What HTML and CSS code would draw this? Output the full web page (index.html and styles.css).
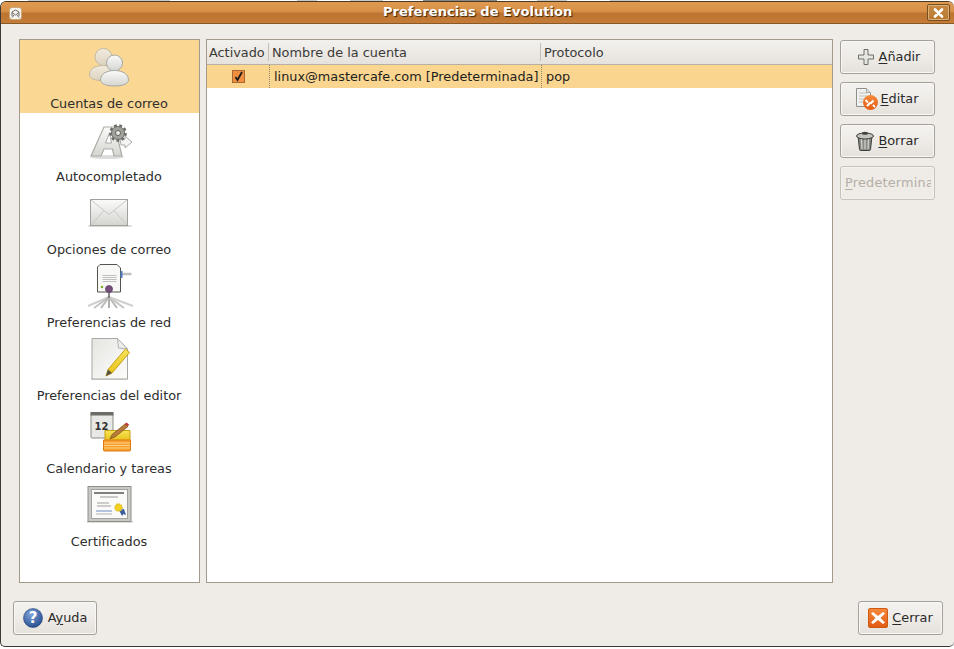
FILE: index.html
```html
<!DOCTYPE html>
<html lang="es">
<head>
<meta charset="utf-8">
<title>Preferencias de Evolution</title>
<link rel="stylesheet" href="styles.css">
</head>
<body>
<svg width="0" height="0" class="defs">
  <defs>
    <linearGradient id="g-white" x1="0" y1="0" x2="0" y2="1"><stop offset="0" stop-color="#fbfbfa"/><stop offset="1" stop-color="#d4d4d0"/></linearGradient>
    <linearGradient id="g-page" x1="0" y1="0" x2="1" y2="1"><stop offset="0" stop-color="#e4e4e0"/><stop offset=".6" stop-color="#f4f4f2"/><stop offset="1" stop-color="#fcfcfb"/></linearGradient>
    <linearGradient id="g-beige" x1="0" y1="0" x2="0" y2="1"><stop offset="0" stop-color="#f2ecdf"/><stop offset="1" stop-color="#dcd2bf"/></linearGradient>
    <linearGradient id="g-yellow" x1="0" y1="0" x2="0" y2="1"><stop offset="0" stop-color="#f6e45a"/><stop offset="1" stop-color="#e6c015"/></linearGradient>
    <linearGradient id="g-orange" x1="0" y1="0" x2="0" y2="1"><stop offset="0" stop-color="#f58a3c"/><stop offset="1" stop-color="#e25a12"/></linearGradient>
    <radialGradient id="g-blue" cx=".4" cy=".3" r=".8"><stop offset="0" stop-color="#7fa4d8"/><stop offset="1" stop-color="#1f4488"/></radialGradient>
  </defs>
</svg>
<div class="strip"></div>
<div class="window">
  <header class="titlebar">
    <svg class="title-icon" width="13" height="13" viewBox="0 0 13 13"><rect x=".5" y=".5" width="12" height="12" rx="2.500" fill="#f6f4f0" stroke="#c9a878"/><path d="M3 9V5l3.500-2L10 5v4M3 5.500l3.500 2.500L10 5.500M3 10.500L5 8M10 10.500L8 8" fill="none" stroke="#6e6a64"/></svg>
    <span class="title-text">Preferencias de Evolution</span>
    <span class="title-close"><svg width="11" height="10" viewBox="0 0 11 10"><path d="M2 1.500l7 7M9 1.500l-7 7" stroke="#fff" stroke-width="2.600" stroke-linecap="round"/></svg></span>
  </header>
  <main class="main">
    <nav class="sidebar">
      <div class="side-item selected">
        <svg class="side-icon" width="48" height="48" viewBox="0 0 48 48">
          <circle cx="17.500" cy="14" r="8.500" fill="url(#g-beige)" stroke="#c4baa6"/>
          <path d="M3.500 32c0-6 5-9.500 14-9.500s11 3 11 9.500c0 4-5 5.500-12 5.500s-13-1.500-13-5.500z" fill="url(#g-beige)" stroke="#c4baa6"/>
          <circle cx="28.500" cy="20" r="8" fill="url(#g-white)" stroke="#a8a8a2"/>
          <path d="M14.500 37c0-6 6-9.500 14-9.500s14 3.500 14 9.500c0 4-6 6-14 6s-14-2-14-6z" fill="url(#g-white)" stroke="#a8a8a2"/>
        </svg>
        <span class="side-label">Cuentas de correo</span>
      </div>
      <div class="side-item">
        <svg class="side-icon" width="48" height="48" viewBox="0 0 48 48">
          <ellipse cx="21" cy="41" rx="17" ry="2" fill="#dcdcda"/>
          <path d="M18 11h11l7 29h-8l-1.500-7H18l-3 7H5z" fill="url(#g-white)" stroke="#ababa6" stroke-width="1.200"/>
          <path d="M23.500 17l2 10h-6z" fill="#fff" stroke="#ababa6"/>
          <path d="M34 23h5v-3l7 6-7 6v-3h-4z" fill="#f4f4f2" stroke="#ababa6"/>
          <circle cx="32" cy="17" r="7.500" fill="none" stroke="#6a6a66" stroke-width="2.600" stroke-dasharray="2.800 2.400"/>
          <circle cx="32" cy="17" r="6.500" fill="#a2a29c" stroke="#6a6a66"/>
          <circle cx="32" cy="17" r="2.500" fill="#ecece8" stroke="#55554f" stroke-width=".9"/>
        </svg>
        <span class="side-label">Autocompletado</span>
      </div>
      <div class="side-item">
        <svg class="side-icon" width="48" height="48" viewBox="0 0 48 48">
          <rect x="2.500" y="36" width="43" height="2" fill="#dadad8"/>
          <rect x="4.500" y="10.500" width="37" height="26" fill="url(#g-white)" stroke="#a0a09c"/>
          <path d="M5 11l18 14.500L41 11M5 36l13-14.500M41 36L28 21.500" fill="none" stroke="#c8c8c4"/>
        </svg>
        <span class="side-label">Opciones de correo</span>
      </div>
      <div class="side-item">
        <svg class="side-icon" width="48" height="48" viewBox="0 0 48 48">
          <g fill="none" stroke-width="2">
            <path d="M23 35L2 44" stroke="#d0d0ce"/>
            <path d="M23 35L8 46" stroke="#c4c4c2"/>
            <path d="M23 35l-8 11" stroke="#b8b8b6"/>
            <path d="M23 35v11" stroke="#b0b0ae"/>
            <path d="M23 35l8 11" stroke="#b8b8b6"/>
            <path d="M23 35l15 11" stroke="#c4c4c2"/>
            <path d="M23 35l24 9" stroke="#d0d0ce"/>
          </g>
          <path d="M36 12h9.500" stroke="#c0c0bc" stroke-width="2.500"/>
          <path d="M14 2.500h17l3.500 3.500v24h-23V5z" fill="#f8f8f6" stroke="#55554f" stroke-linejoin="round"/>
          <rect x="34.500" y="9" width="2" height="7" fill="#4f7fc0"/>
          <path d="M16.500 13.500h14M16.500 15.500h14M16.500 17.500h14M16.500 19.500h14" stroke="#c0c0bc"/>
          <circle cx="16" cy="25" r="1.300" fill="#7cb030"/>
          <path d="M23 30v6" stroke="#666" stroke-width="1.500"/>
          <circle cx="23" cy="27" r="3.500" fill="#75507b" stroke="#5c3566" stroke-width=".7"/>
        </svg>
        <span class="side-label">Preferencias de red</span>
      </div>
      <div class="side-item">
        <svg class="side-icon" width="48" height="48" viewBox="0 0 48 48">
          <rect x="5" y="43" width="37" height="2" fill="#dadad8"/>
          <path d="M6 3.500h25.500l10 10.500v30H6z" fill="url(#g-page)" stroke="#a8a8a4" stroke-linejoin="round"/>
          <path d="M31.500 3.500l1 9.500 9 1z" fill="#eeeeec" stroke="#b0b0ac"/>
          <path d="M39.500 14l4 3.500L26 38l-6 3 2-6.500z" fill="url(#g-yellow)" stroke="#c8a010"/>
          <path d="M22 34.500l4 3.500-6 3z" fill="#57524a"/>
        </svg>
        <span class="side-label">Preferencias del editor</span>
      </div>
      <div class="side-item">
        <svg class="side-icon" width="48" height="48" viewBox="0 0 48 48">
          <rect x="5" y="5" width="22" height="25" rx="1" fill="#e8e8e6" stroke="#8c8c86"/>
          <rect x="4.500" y="4" width="23" height="3.500" fill="#6d6d68"/>
          <text x="15.500" y="22" class="cal-num">12</text>
          <path d="M19 22.500h25V33H19z" fill="url(#g-yellow)" stroke="#c8a010"/>
          <path d="M17.500 32h27v10a1 1 0 0 1-1 1h-25a1 1 0 0 1-1-1z" fill="#f7a030" stroke="#e07810"/>
          <path d="M18 35h26M18 37.500h26M18 40h26" stroke="#fcd080"/>
          <path d="M39 16l3 2.500-13 10.500-5 2 2-4.500z" fill="#b87a38" stroke="#7a5020" stroke-width=".7"/>
          <path d="M38.500 16l2-1.500 2.500 2-1 2z" fill="#c43a3a"/>
        </svg>
        <span class="side-label">Calendario y tareas</span>
      </div>
      <div class="side-item">
        <svg class="side-icon" width="48" height="48" viewBox="0 0 48 48">
          <rect x="1" y="40" width="46" height="2" fill="#dfdfdd"/>
          <rect x="2" y="5.500" width="43" height="35" fill="#c8c8c4" stroke="#8e8e8a"/>
          <rect x="5.500" y="8.500" width="36" height="29" fill="#fafaf8" stroke="#a2a29e"/>
          <path d="M8 12h30" stroke="#808080" stroke-width="2"/>
          <path d="M14 16h18" stroke="#9a9a98"/>
          <path d="M11 22h12M11 25h14" stroke="#a0a09e"/>
          <path d="M10 30h16" stroke="#6a8ec0"/>
          <path d="M10 33h16" stroke="#b0b0ae"/>
          <path d="M33 29l3 6 1.500-2 2.500 1-2-6z" fill="#3a5ea0"/>
          <circle cx="32.500" cy="26.500" r="3.500" fill="#f4d020" stroke="#e0c020" stroke-dasharray="1.500 .8" stroke-width="1.500"/>
        </svg>
        <span class="side-label">Certificados</span>
      </div>
    </nav>
    <section class="accounts">
      <div class="thead">
        <div class="th col-a">Activado</div>
        <div class="th col-b">Nombre de la cuenta</div>
        <div class="th col-c">Protocolo</div>
      </div>
      <div class="trow">
        <div class="td col-a"><span class="check"><svg width="11" height="11" viewBox="0 0 11 11"><path d="M2.500 6l2 3L9 1" fill="none" stroke="#1c1c1c" stroke-width="1.800"/></svg></span></div>
        <div class="td col-b sep">linux@mastercafe.com [Predeterminada]</div>
        <div class="td col-c sep">pop</div>
      </div>
    </section>
    <aside class="actions">
      <button class="btn btn-add" type="button">
        <svg class="btn-icon" width="16" height="16" viewBox="0 0 16 16"><path d="M6 .5h4V6h5.500v4H10v5.500H6V10H.5V6H6z" fill="#e6e6e2" stroke="#6e6e68"/></svg>
        <span><u>A</u>ñadir</span>
      </button>
      <button class="btn btn-edit" type="button">
        <svg class="btn-icon" width="22" height="22" viewBox="0 0 22 22"><path d="M.5.500h10l4 4v14H.5z" fill="#f0f0ee" stroke="#8f8f8b"/><path d="M3 5h8M3 8h8M3 11h5M3 14h4" stroke="#c0c0bc"/><path d="M10.500.5v4h4" fill="#dcdcd8" stroke="#a8a8a4"/><circle cx="14.500" cy="14.500" r="7.500" fill="url(#g-orange)"/><path d="M11 18l3.500-3.500M17.500 12.500l-3 3" stroke="#fff" stroke-width="2.200"/><path d="M9.500 12l2.500 2.500M17 17l2 2" stroke="#fff" stroke-width="1.800"/></svg>
        <span><u>E</u>ditar</span>
      </button>
      <button class="btn btn-del" type="button">
        <svg class="btn-icon" width="18" height="20" viewBox="0 0 18 20"><path d="M2 5h14l-1.500 13.500a1.200 1.200 0 0 1-1.200 1H4.700a1.200 1.200 0 0 1-1.200-1z" fill="#8a8a84" stroke="#3e3e3a"/><path d="M5.500 8l.5 10M9 8v10M12.500 8L12 18" stroke="#d4d4d0" stroke-width="1.200"/><ellipse cx="9" cy="5" rx="8.500" ry="3" fill="#c4c4be" stroke="#3e3e3a"/><ellipse cx="9" cy="2.300" rx="3" ry="1.500" fill="#44443f"/></svg>
        <span><u>B</u>orrar</span>
      </button>
      <button class="btn disabled" type="button" disabled>
        <span class="clip"><u>P</u>redetermina</span>
      </button>
    </aside>
  </main>
  <footer class="footer">
    <button class="btn btn-help" type="button">
      <svg class="btn-icon" width="20" height="20" viewBox="0 0 20 20"><circle cx="10" cy="10" r="9.500" fill="url(#g-blue)" stroke="#1f3f78" stroke-width=".6"/><text x="10" y="15" class="help-q">?</text></svg>
      <span>A<u>y</u>uda</span>
    </button>
    <button class="btn btn-close" type="button">
      <svg class="btn-icon" width="20" height="20" viewBox="0 0 20 20"><rect x=".5" y=".5" width="19" height="19" rx="1.500" fill="url(#g-orange)" stroke="#d05a14"/><path d="M5 4l5 4 5-4 2 1.500-4.500 4.500 4.500 4.500-2 1.500-5-4-5 4-2-1.500L7.500 10 3 5.500z" fill="#fff"/></svg>
      <span><u>C</u>errar</span>
    </button>
  </footer>
</div>
</body>
</html>
```

FILE: styles.css
```css
* { box-sizing: border-box; }
html, body { margin: 0; height: 100%; background: #fff; overflow: hidden; }
body { font: 12.85px "DejaVu Sans", sans-serif; color: #1e1e1e; }
.defs { position: absolute; }
.strip {
  height: 1px;
  background:
    linear-gradient(#c8c8c8, #c8c8c8) 28px 0 / 52px 1px no-repeat,
    linear-gradient(#c8c8c8, #c8c8c8) 120px 0 / 50px 1px no-repeat,
    linear-gradient(#c8c8c8, #c8c8c8) 297px 0 / 20px 1px no-repeat,
    linear-gradient(#c8c8c8, #c8c8c8) 350px 0 / 33px 1px no-repeat,
    linear-gradient(#888, #888) 423px 0 / 74px 1px no-repeat,
    linear-gradient(#c8c8c8, #c8c8c8) 537px 0 / 30px 1px no-repeat,
    linear-gradient(#c8c8c8, #c8c8c8) 610px 0 / 30px 1px no-repeat;
}
.window {
  width: 954px; height: 646px;
  display: flex; flex-direction: column;
  background: #efebe7;
  border-top: 1px solid #4a3a24;
  border-left: 1px solid #3c3a36;
  border-bottom: 1px solid #3c3a36;
  border-radius: 6px 6px 5px 5px;
  overflow: hidden;
}
.titlebar {
  height: 22px; flex: none;
  display: flex; align-items: center;
  position: relative;
  padding: 0 4px 0 8px;
  background: linear-gradient(#e09a50 0, #d69048 45%, #bc7430 55%, #c47c38 100%);
  border-bottom: 1px solid #8a5a26;
}
.title-icon { flex: none; margin-top: 2px; }
.title-text {
  position: absolute; left: 382px; top: 2px;
  font-weight: bold; font-size: 13px;
  letter-spacing: .03px;
  color: #fff; text-shadow: 1px 1px 1px #3a2408;
}
.title-close {
  margin-left: auto;
  width: 23px; height: 17px;
  display: flex; align-items: center; justify-content: center;
  border: 1px solid #7a4f20; border-radius: 2px;
  background: linear-gradient(#c88a44, #b87830);
  box-shadow: inset 0 0 0 1px #dcae78;
}
.main { flex: 1; display: flex; padding: 15px 19px 0 18px; min-height: 0; }
.sidebar {
  width: 181px; height: 544px; flex: none;
  background: #fff;
  border: 1px solid #a39a8c;
}
.side-item {
  height: 73px;
  display: flex; flex-direction: column; align-items: center;
  padding-top: 3px;
  color: #2e2e2e;
}
.side-item.selected { background: #fad793; }
.side-icon { flex: none; display: block; }
.side-label { line-height: 16px; margin-top: 5px; margin-right: 1px; white-space: nowrap; }
.accounts {
  width: 627px; height: 544px; flex: none;
  margin-left: 6px;
  background: #fff;
  border: 1px solid #a39a8c;
}
.thead {
  height: 25px;
  display: flex;
  background: linear-gradient(#f3f1ee, #e6e2dd);
  border-bottom: 1px solid #b8b0a4;
}
.th {
  line-height: 25px; padding-left: 3px;
  color: #3a3a38;
  position: relative; white-space: nowrap;
}
.th + .th::before {
  content: ""; position: absolute; left: -1px; top: 3px; bottom: 3px;
  width: 1px; background: #c4bfb6;
}
.col-a { width: 62px; }
.th.col-a { padding-left: 2px; }
.col-b { width: 272px; }
.col-c { flex: 1; }
.trow {
  height: 23px; display: flex;
  background: linear-gradient(#fbd68e, #fad590);
}
.td { line-height: 23px; white-space: nowrap; }
.td.sep { border-left: 1px dotted #8f8470; padding-left: 4px; }
.td.col-a { display: flex; align-items: center; justify-content: center; padding-left: 1px; }
.check {
  width: 13px; height: 13px;
  display: flex; align-items: center; justify-content: center;
  background: #f08f40; border: 1px solid #a86a30;
}
.actions {
  width: 95px; flex: none;
  margin-left: 7px; margin-top: 1px;
  display: flex; flex-direction: column; gap: 8px;
}
.btn {
  height: 34px; width: 95px;
  display: flex; align-items: center; justify-content: center;
  padding: 0 2px 2px;
  font: inherit; color: #2a2a2a;
  background: linear-gradient(#f4f2ef, #eeebe7 55%, #e4e0da);
  border: 1px solid #a5a199;
  border-radius: 3px;
  box-shadow: inset 0 0 0 1px #f8f7f5;
}
.btn u { text-decoration: underline; text-underline-offset: 2px; }
.btn-icon { flex: none; display: block; margin-top: 2px; }
.btn-add { padding-left: 5px; }
.btn-add .btn-icon { margin-right: 5px; }
.btn-edit .btn-icon { margin-right: 2px; }
.btn-del .btn-icon { margin-right: 4px; }
.btn.disabled { background: #efebe7; border-color: #c6c1b9; color: #b4afa6; justify-content: flex-start; box-shadow: inset 0 0 0 1px #f4f2ef; padding-left: 4px; }
.clip { overflow: hidden; white-space: nowrap; width: 86px; text-align: left; letter-spacing: .2px; }
.footer {
  flex: none; height: 62px;
  display: flex; justify-content: space-between; align-items: flex-start;
  padding: 17px 11px 0 12px;
}
.btn-help { width: 84px; }
.btn-help .btn-icon { margin-right: 5px; }
.btn-close { width: 85px; }
.btn-close .btn-icon { margin-right: 4px; }
.cal-num { font: bold 10px "DejaVu Sans", sans-serif; fill: #333; text-anchor: middle; }
.help-q { font: bold 15px "DejaVu Sans", sans-serif; fill: #fff; text-anchor: middle; }
```
